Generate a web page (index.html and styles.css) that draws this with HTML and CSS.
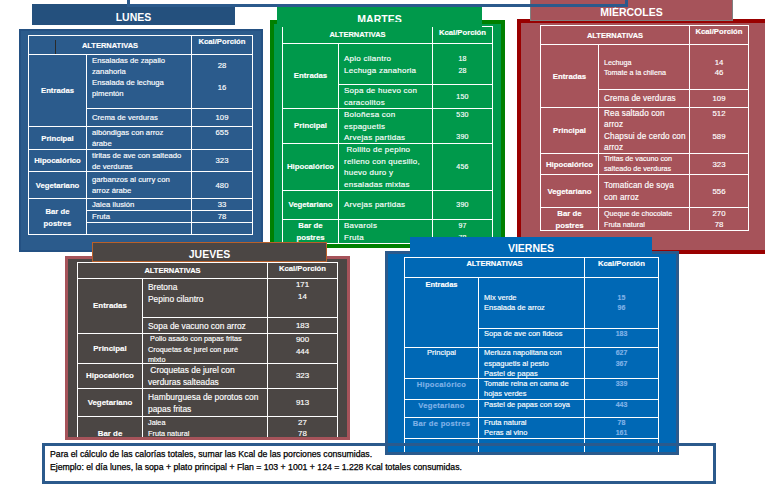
FILE: index.html
```html
<!DOCTYPE html>
<html lang="es">
<head>
<meta charset="utf-8">
<title>Minuta semanal</title>
<link rel="stylesheet" href="styles.css">
</head>
<body>

<section class="panel lunes">
  <div class="tbl">
    <div class="c hd">ALTERNATIVAS<span class="cursor"></span></div>
    <div class="c kc">Kcal/Porción</div>
    <div class="c lbl r2">Entradas</div>
    <div class="c t">Ensaladas de zapallo<br>zanahoria<br>Ensalada de lechuga<br>pimentón</div>
    <div class="c num t l22">28<br>16</div>
    <div class="c">Crema de verduras</div>
    <div class="c num">109</div>
    <div class="c lbl">Principal</div>
    <div class="c">albóndigas con arroz<br>árabe</div>
    <div class="c num t">655</div>
    <div class="c lbl">Hipocalórico</div>
    <div class="c">tiritas de ave con salteado<br>de verduras</div>
    <div class="c num">323</div>
    <div class="c lbl">Vegetariano</div>
    <div class="c">garbanzos al curry con<br>arroz árabe</div>
    <div class="c num">480</div>
    <div class="c lbl r3 l12 pt2">Bar de<br>postres</div>
    <div class="c">Jalea ilusión</div>
    <div class="c num">33</div>
    <div class="c">Fruta</div>
    <div class="c num">78</div>
    <div class="c"></div>
    <div class="c"></div>
  </div>
</section>
<div class="ttl lunes-t">LUNES</div>

<section class="panel martes">
  <div class="tbl">
    <div class="c hd">ALTERNATIVAS</div>
    <div class="c kc">Kcal/Porción</div>
    <div class="c lbl r2">Entradas</div>
    <div class="c t tx pt9">Apio cilantro<br>Lechuga zanahoria</div>
    <div class="c num t pt9 l115">18<br>28</div>
    <div class="c t tx">Sopa de huevo con<br>caracolitos</div>
    <div class="c num">150</div>
    <div class="c lbl">Principal</div>
    <div class="c t tx l115">Boloñesa con<br>espaguetis<br>Arvejas partidas</div>
    <div class="c num t l11">530<br><br>390</div>
    <div class="c lbl">Hipocalórico</div>
    <div class="c t tx l115">&nbsp;Rollito de pepino<br>relleno con quesillo,<br>huevo duro y<br>ensaladas mixtas</div>
    <div class="c num">456</div>
    <div class="c lbl">Vegetariano</div>
    <div class="c tx">Arvejas partidas</div>
    <div class="c num">390</div>
    <div class="c lbl t">Bar de<br>postres</div>
    <div class="c t tx">Bavarois<br>Fruta</div>
    <div class="c num t">97<br>78</div>
  </div>
</section>
<div class="ttl martes-t"><div class="clip">MARTES</div></div>

<section class="panel mierc">
  <div class="tbl">
    <div class="c hd">ALTERNATIVAS</div>
    <div class="c kc">Kcal/Porción</div>
    <div class="c lbl r2">Entradas</div>
    <div class="c t sm pt13 l10">Lechuga<br>Tomate a la chilena</div>
    <div class="c num t pt13 l10">14<br>46</div>
    <div class="c lg">Crema de verduras</div>
    <div class="c num">109</div>
    <div class="c lbl">Principal</div>
    <div class="c t lg l1125">Rea saltado con<br>arroz<br>Chapsui de cerdo con<br>arroz</div>
    <div class="c num t l1125">512<br><br>589</div>
    <div class="c lbl">Hipocalórico</div>
    <div class="c sm l10">Tiritas de vacuno con<br>salteado de verduras</div>
    <div class="c num">323</div>
    <div class="c lbl">Vegetariano</div>
    <div class="c t lg pt5 l12">Tomatican de soya<br>con arroz</div>
    <div class="c num">556</div>
    <div class="c lbl t l12">Bar de<br>postres</div>
    <div class="c t sm">Queque de chocolate<br>Fruta natural</div>
    <div class="c num t">270<br>78</div>
  </div>
</section>
<div class="ttl mierc-t"><div class="clip">MIÉRCOLES</div></div>

<section class="panel jueves">
  <div class="tbl">
    <div class="c hd">ALTERNATIVAS</div>
    <div class="c kc">Kcal/Porción</div>
    <div class="c lbl r2">Entradas</div>
    <div class="c t lg pt2">Bretona<br>Pepino cilantro</div>
    <div class="c num t">171<br>14</div>
    <div class="c lg">Sopa de vacuno con arroz</div>
    <div class="c num">183</div>
    <div class="c lbl">Principal</div>
    <div class="c t sm l105">&nbsp;Pollo asado con papas fritas<br>Croquetas de jurel con puré<br>mixto</div>
    <div class="c num t">900<br>444</div>
    <div class="c lbl">Hipocalórico</div>
    <div class="c lg">&nbsp;Croquetas de jurel con<br>verduras salteadas</div>
    <div class="c num">323</div>
    <div class="c lbl">Vegetariano</div>
    <div class="c lg">Hamburguesa de porotos con<br>papas fritas</div>
    <div class="c num">913</div>
    <div class="c lbl r2 t pt11">Bar de<br>postres</div>
    <div class="c t sm l11">Jalea<br>Fruta natural</div>
    <div class="c num t l11">27<br>78</div>
    <div class="c"></div>
    <div class="c"></div>
  </div>
</section>
<div class="ttl jueves-t">JUEVES</div>

<section class="panel viernes">
  <div class="tbl">
    <div class="c hd t">ALTERNATIVAS</div>
    <div class="c kc">Kcal/Porción</div>
    <div class="c lbl r2 t pt1 l11">Entradas</div>
    <div class="c t pt15">Mix verde<br>Ensalada de arroz</div>
    <div class="c num t pt15">15<br>96</div>
    <div class="c t">Sopa de ave con fideos</div>
    <div class="c num t">183</div>
    <div class="c reg t">Principal</div>
    <div class="c t l105">Merluza napolitana con<br>espaguetis al pesto<br>Pastel de papas</div>
    <div class="c num t l105">627<br>367</div>
    <div class="c lb t pt1">Hipocalórico</div>
    <div class="c t">Tomate reina en cama de<br>hojas verdes</div>
    <div class="c num t">339</div>
    <div class="c lb t pt1">Vegetariano</div>
    <div class="c t">Pastel de papas con soya</div>
    <div class="c num t">443</div>
    <div class="c lb t pt1">Bar de postres</div>
    <div class="c t">Fruta natural<br>Peras al vino</div>
    <div class="c num t">78<br>161</div>
    <div class="c"></div>
    <div class="c"></div>
    <div class="c"></div>
  </div>
</section>
<div class="ttl viernes-t">VIERNES</div>

<div class="note">
  <p>Para el cálculo de las calorías totales, sumar las Kcal de las porciones consumidas.</p>
  <p>Ejemplo: el día lunes, la sopa + plato principal + Flan = 103 + 1001 + 124 = 1.228 Kcal totales consumidas.</p>
</div>

<div class="frame"></div>

</body>
</html>
```

FILE: styles.css
```css
html, body {
  margin: 0;
  padding: 0;
}
body {
  width: 765px;
  height: 484px;
  overflow: hidden;
  background: #ffffff;
  position: relative;
  font-family: "Liberation Sans", Arial, sans-serif;
}

/* ---------- panels (free canvas of overlapping cards) ---------- */
.panel {
  position: absolute;
  box-sizing: border-box;
  overflow: hidden;
}
.lunes {
  left: 19px; top: 29px; width: 244px; height: 223px;
  border: 2px solid #245183;
  --bg: #2b5b8c;
  background: var(--bg);
}
.lunes .tbl { margin: 4px 0 0 7px; }
.martes {
  left: 270px; top: 20px; width: 235px; height: 228px;
  border: 4px solid #008000;
  --bg: #00994b;
  background: var(--bg);
}
.martes .tbl { margin: 2px 0 0 8px; }
.mierc {
  left: 517px; top: 19px; width: 270px; height: 235px;
  border: 4px solid #990000;
  --bg: #a6535a;
  background: var(--bg);
}
.mierc .tbl { margin: 2px 0 0 19px; }
.jueves {
  left: 65px; top: 256px; width: 285px; height: 184px;
  border: 3px solid #a6535a;
  --bg: #4b4644;
  background: var(--bg);
}
.jueves .tbl { margin: 3px 0 0 9px; }
.viernes {
  left: 385px; top: 251px; width: 294px; height: 204px;
  border: 3px solid #2b5a8c;
  --bg: #0068b5;
  background: var(--bg);
}
.viernes .tbl { margin: 3px 0 0 16px; }

/* ---------- title tabs ---------- */
.ttl {
  position: absolute;
  box-sizing: border-box;
  color: #ffffff;
  font-weight: bold;
  font-size: 10.5px;
  text-align: center;
}
.lunes-t {
  left: 32px; top: 4px; width: 203px; height: 21px;
  background: #24507d;
  line-height: 26px;
}
.martes-t {
  left: 277px; top: 7px; width: 205px; height: 20px;
  background: #00994b;
}
.martes-t .clip {
  height: 15px;
  overflow: hidden;
  box-sizing: border-box;
  padding-top: 6px;
  line-height: 12px;
}
.mierc-t {
  left: 530px; top: -2px; width: 203px; height: 23px;
  background: #a6535a;
  border: 1px solid #7f7f7f;
}
.mierc-t .clip {
  height: 17px;
  overflow: hidden;
  box-sizing: border-box;
  padding-top: 7px;
  line-height: 12px;
}
.jueves-t {
  left: 92px; top: 242px; width: 235px; height: 20px;
  background: #4b4644;
  border: 1px solid #b9602a;
  line-height: 22px;
}
.viernes-t {
  left: 410px; top: 237px; width: 242px; height: 20px;
  background: #0068b5;
  line-height: 23px;
}

/* ---------- grid tables ---------- */
.tbl {
  display: grid;
  gap: 1px;
  padding: 1px;
  background: #ffffff;
  width: max-content;
  color: #ffffff;
  -webkit-text-stroke: 0.15px currentColor;
}
.tbl > .c { background: var(--bg); }
.c {
  display: flex;
  flex-direction: column;
  justify-content: center;
  padding: 0 5px;
  white-space: nowrap;
  overflow: hidden;
  min-width: 0;
  box-sizing: border-box;
}
.t { justify-content: flex-start; }
.hd {
  grid-column: span 2;
  font-weight: bold;
  font-size: 7.5px;
  text-align: center;
  position: relative;
  overflow: visible;
}
.kc {
  font-weight: bold;
  font-size: 7.7px;
  text-align: center;
  justify-content: flex-start;
  padding: 0 2px;
}
.lbl {
  font-weight: bold;
  text-align: center;
  padding: 0 2px;
}
.num { text-align: center; }
.r2 { grid-row: span 2; }
.r3 { grid-row: span 3; }

.cursor {
  position: absolute;
  left: 26px;
  top: 4px;
  width: 1px;
  height: 14px;
  background: #2a2a2a;
}

.pt1 { padding-top: 1px; }
.pt2 { padding-top: 2px; }
.pt5 { padding-top: 5px; }
.pt9 { padding-top: 9px; }
.pt11 { padding-top: 11px; }
.pt13 { padding-top: 13px; }
.pt15 { padding-top: 15px; }
.l10 { line-height: 10px; }
.l105 { line-height: 10.5px; }
.l11 { line-height: 11px; }
.l1125 { line-height: 11.25px; }
.l115 { line-height: 11.5px; }
.l12 { line-height: 12px; }
.l22 { line-height: 22px; }

.lunes .tbl {
  grid-template-columns: 57px 104px 60px;
  grid-template-rows: 18px 53px 17px 22px 21px 26px 11px 11px 11px;
  font-size: 7.7px;
  line-height: 11px;
}
.martes .tbl {
  grid-template-columns: 55px 93px 59px;
  grid-template-rows: 16px 40px 23px 34px 46px 28px 23px;
  font-size: 7.8px;
  line-height: 12px;
}
.martes .tx { font-size: 8px; letter-spacing: 0.25px; }
.martes .num { font-size: 7px; letter-spacing: 0.2px; }

.mierc .tbl {
  grid-template-columns: 57px 90px 58px;
  grid-template-rows: 18px 44px 17px 45px 20px 32px 22px;
  font-size: 7.8px;
  line-height: 11px;
}
.mierc .sm { font-size: 7.2px; }
.mierc .lg { font-size: 8.2px; letter-spacing: 0.1px; }

.jueves .tbl {
  grid-template-columns: 64px 124px 69px;
  grid-template-rows: 15px 38px 15px 29px 24px 27px 21px 20px;
  font-size: 7.9px;
  line-height: 12px;
}
.jueves .sm { font-size: 7.3px; }
.jueves .lg { font-size: 8.4px; }

.viernes .tbl {
  grid-template-columns: 73px 105px 73px;
  grid-template-rows: 19px 50px 18px 30px 20px 17px 20px 14px;
  font-size: 7.5px;
  line-height: 10px;
}
.viernes .hd,
.viernes .kc { line-height: 11px; }
.viernes .num {
  color: #80b3e8;
  font-weight: bold;
  font-size: 7px;
}
.viernes .reg {
  text-align: center;
  font-size: 7.6px;
}
.viernes .lb {
  text-align: center;
  color: #80b3e8;
  font-weight: bold;
  font-size: 7.6px;
  letter-spacing: 0.3px;
  padding-left: 0;
  padding-right: 0;
}

/* ---------- note & decorative frame ---------- */
.note {
  position: absolute;
  left: 42px; top: 443px; width: 674px; height: 41px;
  box-sizing: border-box;
  border: 3px solid #2b5a8c;
  padding: 2px 5px 0;
  font-size: 8.7px;
  line-height: 13px;
  color: #000000;
  -webkit-text-stroke: 0.25px #000000;
}
.note p { margin: 0; white-space: nowrap; }

.frame {
  position: absolute;
  left: 127px; top: -20px; width: 501px; height: 27px;
  box-sizing: border-box;
  border: 3px solid #2b5a8c;
}
```
